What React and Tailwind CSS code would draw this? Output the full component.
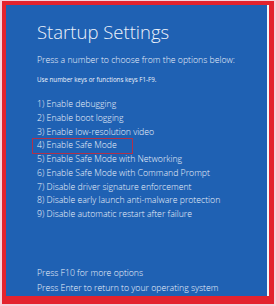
export default function App() {
  const options = [
    '1) Enable debugging',
    '2) Enable boot logging',
    '3) Enable low-resolution video',
    '4) Enable Safe Mode',
    '5) Enable Safe Mode with Networking',
    '6) Enable Safe Mode with Command Prompt',
    '7) Disable driver signature enforcement',
    '8) Disable early launch anti-malware protection',
    '9) Disable automatic restart after failure',
  ];

  return (
    <div className="w-[276px] h-[306px] bg-[#f6d3dc] pl-[2px] pr-[2px] pt-[1px] pb-[2px]">
      <div className="h-full bg-[#e3232e] pl-[4px] pt-[4px] pr-[5px] pb-[8px]">
        <div
          className="h-full bg-[#1f61b3] border-r-2 border-[#f2f4f8] text-[#eef3fb] pl-[31px] flex flex-col"
          style={{ fontFamily: '"Open Sans", "Liberation Sans", sans-serif' }}
        >
          <h1 className="mt-[15px] text-[18.5px] font-light leading-[23px]">Startup Settings</h1>
          <p className="mt-[11px] text-[8.7px] leading-[12px] font-light">
            Press a number to choose from the options below:
          </p>
          <p className="mt-[10px] text-[6.2px] leading-[8px]">Use number keys or functions keys F1-F9.</p>
          <ul className="mt-[14px] text-[8.7px] font-light">
            {options.map((o, i) => (
              <li key={o} className="relative h-[13.75px] leading-[13.75px] whitespace-nowrap">
                {o}
                {i === 3 && (
                  <span className="absolute left-[-5px] top-[-1px] w-[101px] h-[16px] border border-[#b0314a]" />
                )}
              </li>
            ))}
          </ul>
          <div className="mt-auto mb-[0px] text-[8.7px] font-light">
            <p className="leading-[15px]">Press F10 for more options</p>
            <p className="leading-[15px]">Press Enter to return to your operating system</p>
          </div>
        </div>
      </div>
    </div>
  );
}
